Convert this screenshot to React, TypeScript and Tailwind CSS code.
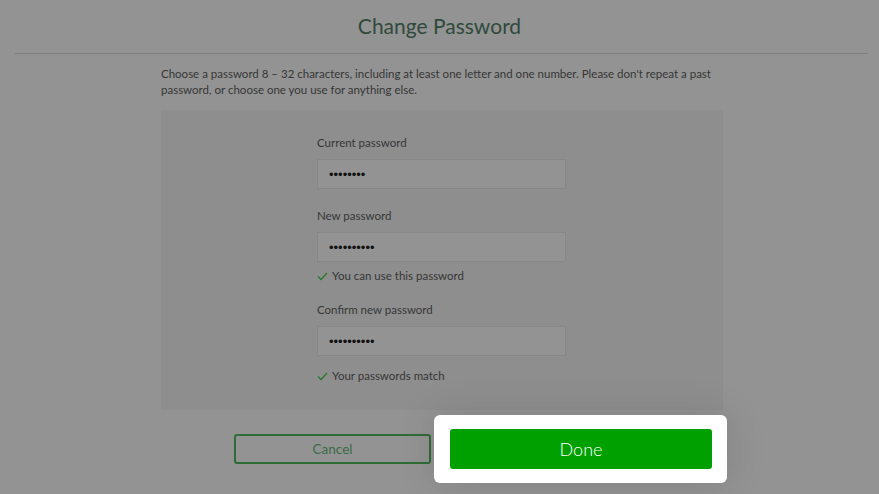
import React from "react";

const font = { fontFamily: 'Lato, "Open Sans", sans-serif' };

function Check() {
  return (
    <svg width="11" height="9" viewBox="0 0 11 9" className="shrink-0">
      <path d="M1 4.5 L4 7.5 L10 1" fill="none" stroke="#2b7a2b" strokeWidth="1.4" />
    </svg>
  );
}

function Field({ label, dots, top }: { label: string; dots: number; top: string }) {
  return (
    <div className={`flex flex-col ${top}`}>
      <div className="text-[11.5px] leading-[16px] text-[#363636]">{label}</div>
      <div className="mt-[8px] h-[30px] w-[249px] border border-[#878787] bg-[#939393] flex items-center pl-[11px]">
        <span
          className="text-[13px] text-[#111] leading-none"
          style={{ fontFamily: '"Liberation Sans", Arial, sans-serif' }}
        >
          {"•".repeat(dots)}
        </span>
      </div>
    </div>
  );
}

export default function App() {
  return (
    <div className="w-[879px] h-[494px] bg-[#939393] overflow-hidden flex flex-col" style={font}>
      <div className="pt-[12px] h-[53px] text-center text-[21px] leading-[28px] text-[#2f4a3c]">Change Password</div>
      <div className="ml-[15px] mr-[11px] h-[1px] bg-[#7f7f7f]" />
      <div className="ml-[161px] w-[562px] mt-[12px] text-[11.5px] leading-[16px] text-[#363636]">
        Choose a password 8 – 32 characters, including at least one letter and one number. Please don't repeat a past
        <br />
        password, or choose one you use for anything else.
      </div>
      <div className="ml-[161px] w-[562px] mt-[12px] h-[300px] bg-[#8e8e8e] pl-[156px] pt-[25px] flex flex-col">
        <Field label="Current password" dots={8} top="" />
        <Field label="New password" dots={10} top="mt-[19px]" />
        <div className="mt-[6px] flex items-center gap-[4px] text-[11.5px] leading-[16px] text-[#363636]">
          <Check />
          <span>You can use this password</span>
        </div>
        <Field label="Confirm new password" dots={10} top="mt-[18px]" />
        <div className="mt-[12px] flex items-center gap-[4px] text-[11.5px] leading-[16px] text-[#363636]">
          <Check />
          <span>Your passwords match</span>
        </div>
      </div>
      <div className="ml-[234px] mt-[5px] flex items-center gap-[3px]">
        <div className="w-[197px] h-[30px] rounded-[3px] border-2 border-[#2f6b37] flex items-center justify-center text-[13.5px] text-[#3b6b49]">
          Cancel
        </div>
        <div className="bg-white rounded-[6px] pt-[14px] pb-[14px] pl-[16px] pr-[15px] shadow-[0_0_40px_rgba(0,0,0,0.12)]">
          <div className="w-[262px] h-[40px] rounded-[3px] bg-[#00a000] flex items-center justify-center text-[18px] font-light text-white">
            Done
          </div>
        </div>
      </div>
    </div>
  );
}
